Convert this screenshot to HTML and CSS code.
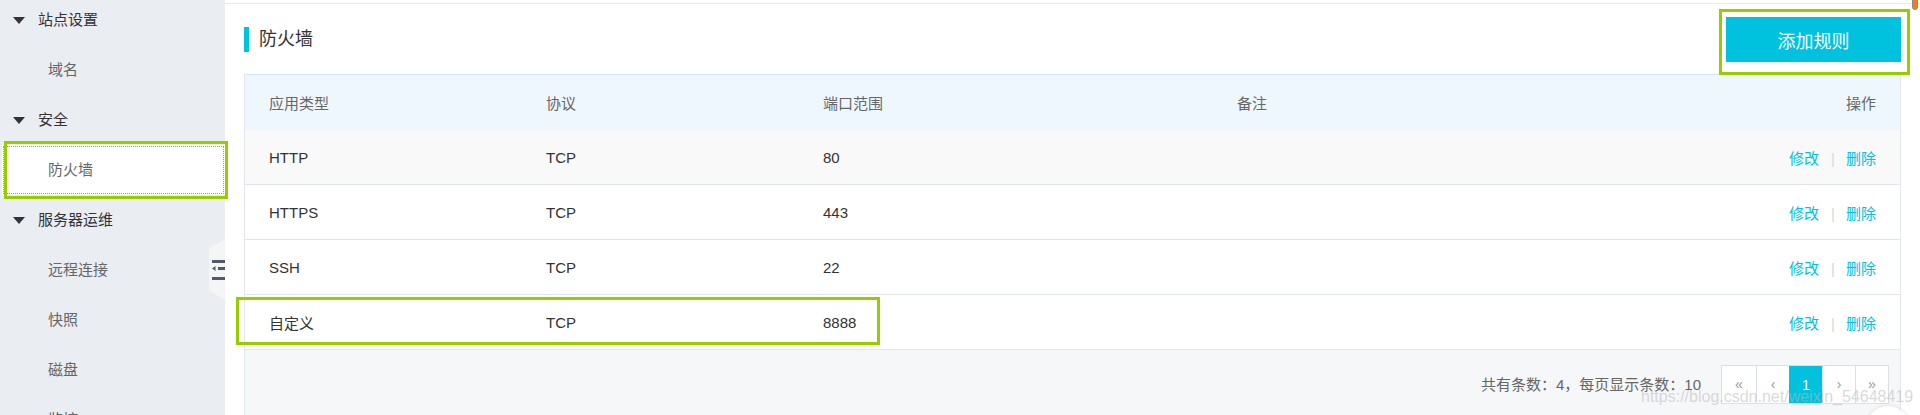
FILE: index.html
```html
<!DOCTYPE html>
<html lang="zh-CN">
<head>
<meta charset="utf-8">
<title>防火墙</title>
<link rel="stylesheet" href="styles.css">
</head>
<body>
<div class="app">
  <aside class="sidebar">
    <ul class="nav">
      <li class="nav-group"><span class="caret"></span>站点设置</li>
      <li class="nav-item">域名</li>
      <li class="nav-group"><span class="caret"></span>安全</li>
      <li class="nav-item active">防火墙</li>
      <li class="nav-group"><span class="caret"></span>服务器运维</li>
      <li class="nav-item">远程连接</li>
      <li class="nav-item">快照</li>
      <li class="nav-item">磁盘</li>
      <li class="nav-item">监控</li>
    </ul>
    <div class="collapse-toggle">
      <svg class="collapse-icon" width="13" height="22" viewBox="0 0 13 22">
        <rect x="0" y="1" width="13" height="3" fill="#4f5b6b"/>
        <polygon points="0,9.5 3.5,7 3.5,12" fill="#4f5b6b"/>
        <rect x="6" y="8" width="7" height="3" fill="#4f5b6b"/>
        <rect x="0" y="18" width="13" height="3" fill="#4f5b6b"/>
      </svg>
    </div>
  </aside>
  <main class="main">
    <div class="topline"></div>
    <div class="content">
      <div class="page-head">
        <h1 class="page-title">防火墙</h1>
        <button class="btn-add">添加规则</button>
      </div>
      <div class="table">
        <div class="tr thead">
          <div class="td">应用类型</div>
          <div class="td">协议</div>
          <div class="td">端口范围</div>
          <div class="td">备注</div>
          <div class="td op">操作</div>
        </div>
        <div class="tr odd">
          <div class="td">HTTP</div>
          <div class="td">TCP</div>
          <div class="td">80</div>
          <div class="td"></div>
          <div class="td op"><a class="link">修改</a><span class="sep">|</span><a class="link">删除</a></div>
        </div>
        <div class="tr">
          <div class="td">HTTPS</div>
          <div class="td">TCP</div>
          <div class="td">443</div>
          <div class="td"></div>
          <div class="td op"><a class="link">修改</a><span class="sep">|</span><a class="link">删除</a></div>
        </div>
        <div class="tr">
          <div class="td">SSH</div>
          <div class="td">TCP</div>
          <div class="td">22</div>
          <div class="td"></div>
          <div class="td op"><a class="link">修改</a><span class="sep">|</span><a class="link">删除</a></div>
        </div>
        <div class="tr">
          <div class="td">自定义</div>
          <div class="td">TCP</div>
          <div class="td">8888</div>
          <div class="td"></div>
          <div class="td op"><a class="link">修改</a><span class="sep">|</span><a class="link">删除</a></div>
        </div>
        <div class="tfoot">
          <span class="total">共有条数：4，每页显示条数：10</span>
          <ul class="pager">
            <li>«</li>
            <li>‹</li>
            <li class="current">1</li>
            <li>›</li>
            <li>»</li>
          </ul>
        </div>
      </div>
    </div>
  </main>
</div>
<div class="mark mark-nav"></div>
<div class="mark mark-btn"></div>
<div class="mark mark-row"></div>
<div class="watermark">https://blog.csdn.net/weixin_54648419</div>
<div class="float-btn"></div>
<div class="scroll-thumb"></div>
</body>
</html>
```
FILE: styles.css
```css
* { box-sizing: border-box; }
html, body { margin: 0; padding: 0; }
body {
  width: 1920px;
  height: 415px;
  overflow: hidden;
  font-family: "Liberation Sans", "Noto Sans CJK SC", sans-serif;
  font-size: 15px;
  color: #333;
  background: #fff;
  position: relative;
}
.app {
  display: flex;
  height: 415px;
}
.sidebar {
  width: 225px;
  flex: none;
  background: #eaedf1;
  position: relative;
  overflow: hidden;
}
.nav {
  list-style: none;
  margin: -5px 0 0 0;
  padding: 0;
}
.nav li {
  height: 50px;
  line-height: 50px;
  white-space: nowrap;
}
.nav-group {
  display: flex;
  align-items: center;
  padding-left: 13px;
  color: #333;
}
.caret {
  width: 0;
  height: 0;
  border-left: 6px solid transparent;
  border-right: 6px solid transparent;
  border-top: 7px solid #333;
  margin-right: 13px;
  margin-top: 1px;
}
.nav-item {
  padding-left: 48px;
  color: #666;
}
.nav-item.active {
  background: #fff;
  outline: 1px dotted #9a9a9a;
  outline-offset: -2px;
  margin-left: 2px;
  padding-left: 46px;
}
.collapse-toggle {
  position: absolute;
  right: 0;
  top: 239px;
  width: 16px;
  height: 61px;
  background: #f5f5f6;
  clip-path: polygon(100% 0, 0 15%, 0 84%, 100% 100%);
}
.collapse-icon {
  position: absolute;
  left: 3px;
  top: 20px;
}
.main {
  flex: 1;
  display: flex;
  flex-direction: column;
  min-width: 0;
}
.topline {
  height: 4px;
  border-bottom: 1px solid #e6e8eb;
  flex: none;
}
.content {
  flex: 1;
  padding: 0 19px;
  display: flex;
  flex-direction: column;
}
.page-head {
  height: 70px;
  display: flex;
  align-items: center;
  justify-content: space-between;
  flex: none;
}
.page-title {
  margin: 0;
  font-size: 18px;
  font-weight: normal;
  color: #333;
  border-left: 5px solid #00c1de;
  height: 25px;
  line-height: 25px;
  padding-left: 10px;
}
.btn-add {
  width: 175px;
  height: 45px;
  background: #00c1de;
  border: none;
  color: #fff;
  font-family: inherit;
  font-size: 18px;
  padding: 0;
  margin-top: 1px;
}
.table {
  flex: 1;
  display: flex;
  flex-direction: column;
  border-left: 1px solid #e3e6ea;
  border-right: 1px solid #e3e6ea;
}
.tr {
  display: grid;
  grid-template-columns: 277px 277px 414px 1fr 240px;
  height: 55px;
  border-bottom: 1px solid #e2e5e9;
  align-items: center;
  flex: none;
}
.tr.thead {
  height: 56px;
  background: #eff7fe;
  border-top: 1px solid #d3e6f8;
  border-bottom: none;
  color: #666;
}
.tr.odd { background: #f9f9f9; }
.td {
  padding: 0 24px;
  white-space: nowrap;
}
.td.op {
  text-align: right;
}
.link {
  color: #00c1de;
}
.sep {
  color: #d5d8dc;
  margin: 0 11px 0 12px;
}
.tfoot {
  flex: 1;
  background: #f6f7f9;
  display: flex;
  justify-content: flex-end;
  align-items: flex-start;
  padding: 15px 11px 0 0;
  gap: 20px;
}
.total {
  color: #666;
  line-height: 39px;
}
.pager {
  list-style: none;
  margin: 0;
  padding: 0;
  display: flex;
  border: 1px solid #dcdfe3;
  background: #fff;
}
.pager li {
  width: 33px;
  height: 37px;
  line-height: 37px;
  text-align: center;
  color: #999;
  font-size: 14px;
  border-left: 1px solid #dcdfe3;
}
.pager li:first-child { border-left: none; width: 34px; }
.pager li.current {
  background: #00c1de;
  color: #fff;
  border-left-color: #00c1de;
  font-size: 15px;
}
.mark {
  position: absolute;
  border: 3px solid #99cc00;
  pointer-events: none;
}
.mark-nav { left: 4px; top: 141px; width: 224px; height: 58px; }
.mark-btn { left: 1719px; top: 9px; width: 191px; height: 66px; }
.mark-row { left: 236px; top: 297px; width: 644px; height: 48px; }
.watermark {
  position: absolute;
  left: 1641px;
  top: 388px;
  font-family: "Liberation Sans", sans-serif;
  font-size: 16px;
  color: rgba(185, 185, 185, 0.55);
  white-space: nowrap;
}
.float-btn {
  position: absolute;
  left: 1866px;
  top: 406px;
  width: 44px;
  height: 44px;
  border-radius: 50%;
  background: #fff;
  box-shadow: 0 0 4px rgba(0, 0, 0, 0.12);
}
.scroll-thumb {
  position: absolute;
  left: 1912px;
  top: -4px;
  width: 6px;
  height: 14px;
  border-radius: 3px;
  background: #f47a1f;
  border: 1px solid #8a8a8a;
}
```
